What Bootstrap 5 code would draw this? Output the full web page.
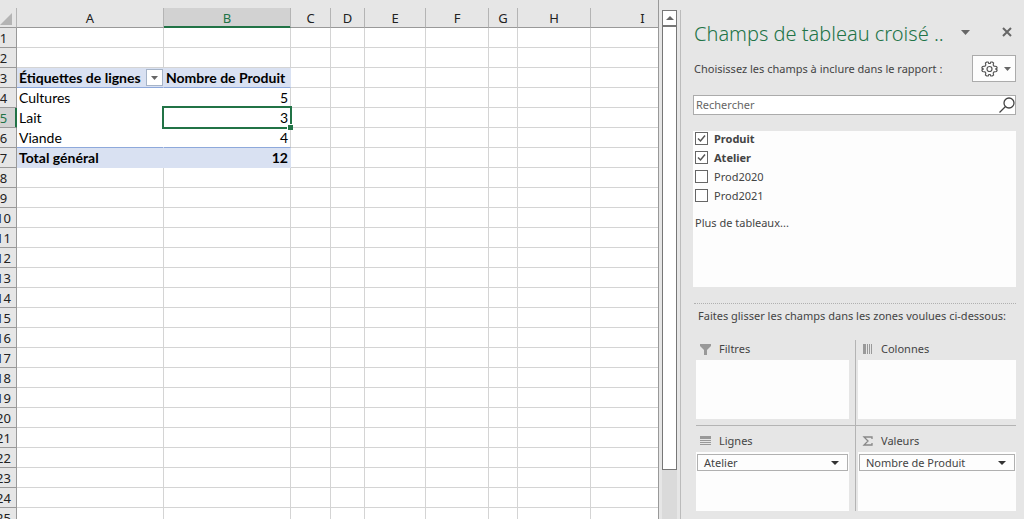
<!DOCTYPE html>
<html lang="fr">
<head>
<meta charset="utf-8">
<meta name="viewport" content="width=device-width, initial-scale=1">
<title>Champs de tableau croisé dynamique</title>
<link href="https://cdn.jsdelivr.net/npm/bootstrap@5.3.0/dist/css/bootstrap.min.css" rel="stylesheet">
<style>
  :root { --green:#217346; --chrome:#e6e6e6; --rule:#d4d4d4; --edge:#999; --band:#d9e1f2; --ink:#444; }
  body { background:var(--chrome); color:var(--ink); font:11px/16px "Noto Sans","Open Sans",sans-serif; }
  .workspace { height:100vh; }

  /* Worksheet */
  .sheet { min-width:0; border-right:1px solid var(--edge); background:linear-gradient(var(--chrome) 28px,#fff 28px); }
  .grid { table-layout:fixed; width:704px; margin-left:-9px; border-collapse:separate; border-spacing:0; color:#000; }
  .grid th, .grid td { height:20px; padding:0 2px; white-space:nowrap; border-right:1px solid var(--rule); border-bottom:1px solid var(--rule); font:14px/17px Lato,sans-serif; }
  .grid th { font:13px/17px "Noto Sans",sans-serif; text-align:center; background:var(--chrome); color:#222; border-color:var(--edge); padding:2px 0 0; }
  .grid thead th { border-right-color:#b4b4b4; padding:0; line-height:16px; }
  .grid thead .current { background:#d2d2d2; color:var(--green); border-bottom-color:var(--green); box-shadow:inset 0 -1px var(--green); }
  .grid tbody .current { background:#d2d2d2; color:var(--green); border-right-color:var(--green); box-shadow:inset -1px 0 var(--green); }
  .grid .plain { border-bottom-color:#fff; }
  .grid .plain.label-cell { border-right-color:#fff; }
  .grid .band { background:var(--band); border-right-color:var(--band); border-bottom-color:var(--band); font-weight:700; }
  .grid .ruled, .grid .ruled.plain { border-bottom-color:#8ea9db; }
  .grid .with-filter { padding-right:0; }
  .filter-btn { width:17px; height:17px; padding:0; background:#fff; border:1px solid #a6b4c8; line-height:0; }
  .selection { position:absolute; inset:-2px; border:2px solid var(--green); pointer-events:none; }
  .selection::after { content:""; position:absolute; right:-3px; bottom:-3px; width:6px; height:6px; background:var(--green); border:solid #fff; border-width:1px 0 0 1px; }

  /* Scroll bar */
  .gutter { padding:10px 3px 0; }
  .track { width:15px; background:#dadada; }
  .track button { height:16px; padding:0; background:#fff; border:1px solid #777; line-height:0; }
  .thumb { height:444px; background:#fff; border:1px solid #777; }

  /* Field pane */
  .pane { width:344px; margin-top:10px; border-left:1px solid #bbb; padding:8px 8px 6px 13px; }
  .pane h1 { font:300 20px/32px "Noto Sans","Open Sans",sans-serif; color:var(--green); }
  .bare { padding:0; border:0; background:none; line-height:0; }
  .tools { margin-top:5px; }
  .gear { width:44px; height:27px; background:#fdfdfd; border:1px solid #ababab; padding:0 4px 0 8px; }
  .search { height:20px; margin:13px 0 0 -1px; background:#fff; border:1px solid #ababab; }
  .search input { border:0; padding:0 2px; outline:0; background:none; min-width:0; color:var(--ink); }
  .search input::placeholder { color:#666; opacity:1; }
  .fields { height:156px; margin-left:-1px; background:#fdfdfd; padding:0 2px; }
  .fields label { height:19px; padding-top:1px; line-height:14px; gap:6px; }
  .tick { appearance:none; width:13px; height:13px; margin:0; border:1px solid #666; background:#fff; }
  .tick:checked { background:#fff url("data:image/svg+xml,%3Csvg xmlns='http://www.w3.org/2000/svg' viewBox='0 0 11 11'%3E%3Cpath d='M2 5.5 4.5 8 9 2.5' fill='none' stroke='%23555' stroke-width='1.5'/%3E%3C/svg%3E"); }
  .fields a { color:var(--ink); }
  .dots { border-top:1px dotted #b0b0b0; }
  .zones { display:grid; grid-template-columns:159px 1fr; margin-left:2px; }
  .zone:nth-child(-n+2) { border-bottom:1px solid #b4b4b4; padding-bottom:6px; }
  .zone:nth-child(n+3) { padding-top:6px; }
  .zone:nth-child(even) { border-left:1px solid #b4b4b4; padding-left:2px; }
  .zone:nth-child(odd) .well { margin-right:6px; }
  .zone h2 { font-size:11px; line-height:18px; padding:0 0 2px 4px; font-weight:400; }
  .well { height:59px; background:#fdfdfd; padding:2px 1px; }
  .chip { height:17px; width:100%; padding:0 8px 0 6px; background:#fdfdfd; border:1px solid #b0b0b0; line-height:15px; color:var(--ink); }
</style>
</head>
<body>
<div class="workspace d-flex overflow-hidden">
  <main class="sheet flex-grow-1 overflow-hidden pt-2">
    <table class="grid">
      <colgroup><col style="width:26px"><col style="width:147px"><col style="width:127px"><col style="width:40px"><col style="width:34px"><col style="width:61px"><col style="width:63px"><col style="width:29px"><col style="width:73px"><col style="width:104px"></colgroup>
      <thead>
        <tr><th class="text-end"><svg class="me-1" width="12" height="12" viewBox="0 0 12 12" aria-hidden="true"><path d="M12 0v12H0z" fill="#b4b4b4"/></svg></th><th>A</th><th class="current">B</th><th>C</th><th>D</th><th>E</th><th>F</th><th>G</th><th>H</th><th>I</th></tr>
      </thead>
      <tbody id="rows">
        <tr><th>1</th><td></td><td></td></tr>
        <tr><th>2</th><td></td><td></td></tr>
        <tr><th>3</th><td class="band ruled with-filter"><div class="d-flex justify-content-between align-items-center"><span>Étiquettes de lignes</span><button class="filter-btn" type="button" aria-label="Filtrer"><svg width="7" height="4"><path d="M0 0h7L3.500 4z" fill="#666"/></svg></button></div></td><td class="band ruled">Nombre de Produit</td></tr>
        <tr><th>4</th><td class="plain label-cell">Cultures</td><td class="plain text-end">5</td></tr>
        <tr><th class="current">5</th><td class="plain label-cell">Lait</td><td class="plain text-end position-relative">3<span class="selection"></span></td></tr>
        <tr><th>6</th><td class="plain label-cell ruled">Viande</td><td class="plain text-end ruled">4</td></tr>
        <tr><th>7</th><td class="band">Total général</td><td class="band text-end">12</td></tr>
      </tbody>
    </table>
  </main>

  <div class="gutter d-flex flex-shrink-0">
    <div class="track d-flex flex-column">
      <button type="button" aria-label="Défiler vers le haut"><svg width="8" height="4"><path d="M4 0l4 4H0z" fill="#666"/></svg></button>
      <div class="thumb"></div>
    </div>
  </div>

  <aside class="pane flex-shrink-0">
    <header class="d-flex align-items-center">
      <h1 class="mb-0 me-auto text-nowrap">Champs de tableau croisé ..</h1>
      <button class="bare me-4 mb-1" type="button" aria-label="Options du volet"><svg width="9" height="5"><path d="M0 0h9L4.500 5z" fill="#666"/></svg></button>
      <button class="bare ms-2 me-1 mb-1" type="button" aria-label="Fermer"><svg width="10" height="10" viewBox="0 0 10 10"><path d="M1 1l8 8M9 1l-8 8" stroke="#666" stroke-width="2"/></svg></button>
    </header>
    <div class="tools d-flex align-items-center justify-content-between">
      <span>Choisissez les champs à inclure dans le rapport :</span>
      <button class="gear d-flex align-items-center justify-content-between" type="button" aria-label="Outils"><svg width="17" height="16" viewBox="0 0 17 16" fill="none" stroke="#555" stroke-width="1.200" stroke-linejoin="round"><path d="M5.800 1H7.200L7.800 2.500H9.200L9.800 1H11.200L12.600 2L12.200 4L13 5.200L15.500 5.500L16.200 7L14.600 8L16.200 9L15.500 10.500L13 10.800L12.200 12L12.600 14L11.200 15H9.800L9.200 13.500H7.800L7.200 15H5.800L4.400 14L4.800 12L4 10.800L1.500 10.500L.8 9L2.400 8L.8 7L1.500 5.500L4 5.200L4.800 4L4.400 2Z"/><circle cx="8.500" cy="8" r="2.500"/></svg><svg width="7" height="4"><path d="M0 0h7L3.500 4z" fill="#666"/></svg></button>
    </div>
    <div class="search d-flex align-items-center">
      <input class="flex-grow-1" type="text" placeholder="Rechercher" aria-label="Rechercher">
      <button class="bare" type="button" aria-label="Lancer la recherche"><svg width="16" height="17" viewBox="0 0 16 17" fill="none" stroke="#444" stroke-width="1.300"><circle cx="10" cy="6" r="5"/><path d="M6.500 9.500L.5 15.500"/></svg></button>
    </div>
    <div class="fields mt-3">
      <label class="d-flex align-items-start fw-bold"><input class="tick" type="checkbox" checked>Produit</label>
      <label class="d-flex align-items-start fw-bold"><input class="tick" type="checkbox" checked>Atelier</label>
      <label class="d-flex align-items-start"><input class="tick" type="checkbox">Prod2020</label>
      <label class="d-flex align-items-start"><input class="tick" type="checkbox">Prod2021</label>
      <a class="d-inline-block text-decoration-none mt-2" href="#">Plus de tableaux...</a>
    </div>
    <div class="dots mt-3 pt-1 ps-1 text-nowrap">Faites glisser les champs dans les zones voulues ci-dessous:</div>
    <div class="zones mt-3">
      <section class="zone"><h2 class="mb-0 d-flex align-items-center gap-2"><svg width="11" height="11"><path d="M0 0h11v2L7 6v5H4V6L0 2z" fill="#999"/></svg>Filtres</h2><div class="well"></div></section>
      <section class="zone"><h2 class="mb-0 d-flex align-items-center gap-2"><svg width="11" height="10"><path d="M1 0h3v10H1zM5 0h1v10H5zM7 0h1v10H7zM9 0h1v10H9z" fill="#999"/></svg>Colonnes</h2><div class="well"></div></section>
      <section class="zone"><h2 class="mb-0 d-flex align-items-center gap-2"><svg width="11" height="10"><path d="M0 0h11v3H0zM0 4h11v1H0zM0 6h11v1H0zM0 8h11v1H0z" fill="#999"/></svg>Lignes</h2><div class="well"><button class="chip d-flex align-items-center justify-content-between" type="button">Atelier<svg width="8" height="4"><path d="M0 0h8L4 4z" fill="#333"/></svg></button></div></section>
      <section class="zone"><h2 class="mb-0 d-flex align-items-center gap-2"><svg width="11" height="10" fill="none" stroke="#888" stroke-width="1.300"><path d="M10 3V1H2l4 4-4 4h8V7"/></svg>Valeurs</h2><div class="well"><button class="chip d-flex align-items-center justify-content-between" type="button">Nombre de Produit<svg width="8" height="4"><path d="M0 0h8L4 4z" fill="#333"/></svg></button></div></section>
    </div>
  </aside>
</div>
<script src="https://cdn.jsdelivr.net/npm/bootstrap@5.3.0/dist/js/bootstrap.bundle.min.js"></script>
<script>
  // Pad every row out to column I and add the empty rows below the pivot table.
  const rows = document.getElementById('rows');
  for (let n = rows.rows.length + 1; n <= 25; n++) {
    const head = document.createElement('th');
    head.textContent = n;
    rows.insertRow().append(head);
  }
  for (const row of rows.rows) {
    while (row.cells.length < 10) row.insertCell();
  }
</script>
</body>
</html>
